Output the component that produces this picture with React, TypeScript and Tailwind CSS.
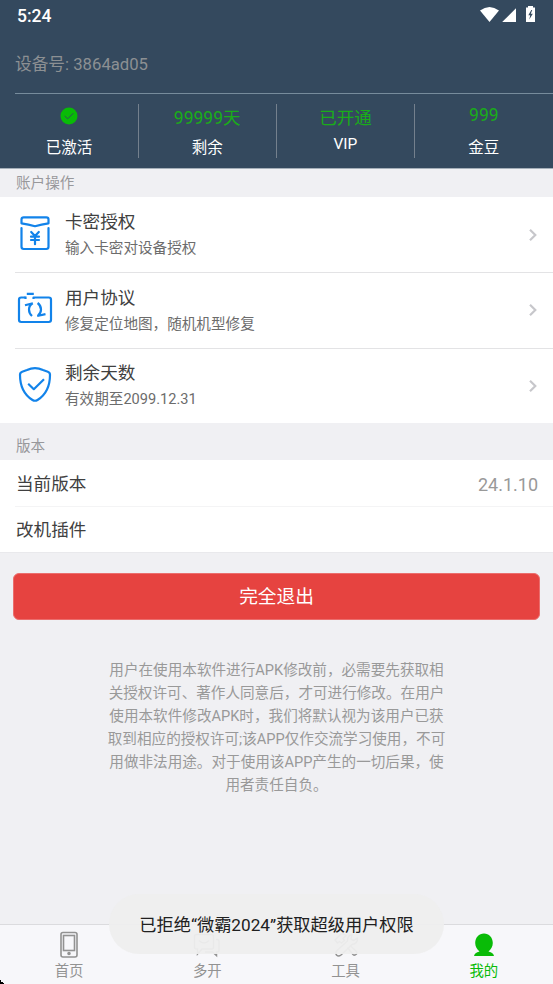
import type { ReactNode } from "react";

const stats = [
  { value: null, label: "已激活", valueClass: "mt-3.5 h-[19px]", labelClass: "mt-[10px]" },
  { value: "99999天", label: "剩余", valueClass: "mt-[15px] h-[19px]", labelClass: "mt-[9px]" },
  { value: "已开通", label: "VIP", valueClass: "mt-[15px] h-[19px]", labelClass: "mt-[5px]" },
  { value: "999", label: "金豆", valueClass: "mt-3 h-[19px]", labelClass: "mt-[12px]" },
];

const notice = [
  "用户在使用本软件进行APK修改前，必需要先获取相",
  "关授权许可、著作人同意后，才可进行修改。在用户",
  "使用本软件修改APK时，我们将默认视为该用户已获",
  "取到相应的授权许可;该APP仅作交流学习使用，不可",
  "用做非法用途。对于使用该APP产生的一切后果，使",
  "用者责任自负。",
];

function CardIcon() {
  return (
    <svg width="36" height="38" viewBox="0 0 36 38" fill="none" stroke="#1283ea" strokeWidth="2.2" strokeLinejoin="round" strokeLinecap="round">
      <path d="M4.500 9.300V5.500Q4.500 3.300 6.700 3.300H29.300Q31.500 3.300 31.500 5.500V9.300Q24.500 10.200 18 12.200Q11.500 10.200 4.500 9.300Z" />
      <path d="M4.500 14V32.800Q4.500 35 6.700 35H29.300Q31.500 35 31.500 32.800V14" />
      <path d="M14.200 18L18 22L21.800 18M14 22.700H22M14 26H22M18 22V30.200" />
    </svg>
  );
}

function RepairIcon() {
  return (
    <svg width="36" height="38" viewBox="0 0 36 38" fill="none" stroke="#1283ea" strokeWidth="2.200" strokeLinejoin="round">
      <path d="M8.500 7.500H4.200Q2 7.500 2 9.700V29.800Q2 32 4.200 32H31.800Q34 32 34 29.800V9.700Q34 7.500 31.800 7.500H16.500V9" />
      <path d="M9.800 3.800H16.800M8.500 6.400V9" />
      <path d="M15.800 13.200Q12 15.200 12 19.500Q12 23.200 15 26M8 15.200L15.800 13.200M20.600 13Q24 15.500 24 19.500Q24 23 21 25.600M20.200 26L28.500 24.200" />
    </svg>
  );
}

function ShieldIcon() {
  return (
    <svg width="36" height="38" viewBox="0 0 36 38" fill="none" stroke="#1283ea" strokeWidth="2.200" strokeLinejoin="round">
      <path d="M18 3.200Q14 3.200 10 5L5.200 6.700Q3 7.500 3 9.700C3 21 7.500 30 15.500 35Q18 36.500 20.500 35C28.500 30 33 21 33 9.700Q33 7.500 30.800 6.700L26 5Q22 3.200 18 3.200Z" />
      <path d="M11.200 18.800L16.800 24.200L27 14.200" />
    </svg>
  );
}

const actions = [
  { icon: <CardIcon />, title: "卡密授权", desc: "输入卡密对设备授权" },
  { icon: <RepairIcon />, title: "用户协议", desc: "修复定位地图，随机机型修复" },
  { icon: <ShieldIcon />, title: "剩余天数", desc: "有效期至2099.12.31" },
];

function Chevron() {
  return (
    <svg width="10" height="14" viewBox="0 0 10 14" fill="none" stroke="#c7c7cb" strokeWidth="2.200">
      <path d="M2 1.800L7.300 7L2 12.200" />
    </svg>
  );
}

function StatusIcons() {
  return (
    <svg width="58" height="20" viewBox="0 0 58 20" fill="#fff" className="-mt-1.5">
      <path d="M1 7.500Q10.500 0.500 20 7.500L10.500 19Z" />
      <path d="M37 5.200V19H23.200Z" />
      <path d="M49 4.500V3H54V4.500H56V19H47V4.500ZM52.300 7L49.300 12.200H51.200L50.300 16.500L53.800 10.800H51.800L53.200 7Z" fillRule="evenodd" />
    </svg>
  );
}

function Tab({ icon, label, active = false }: { icon: ReactNode; label: string; active?: boolean }) {
  return (
    <div className={`flex flex-1 flex-col items-center pt-[6px] ${active ? "text-[#09bb07]" : "text-[#929292]"}`}>
      <div className="h-[30px]">{icon}</div>
      <span className="text-[14.400px] leading-[22px]">{label}</span>
    </div>
  );
}

export default function App() {
  return (
    <div className="relative flex h-[984px] w-[553px] flex-col overflow-hidden bg-[#f0f0f3] font-['Roboto','Noto_Sans_CJK_SC',sans-serif] text-[#404040]">
      {/* Header */}
      <header className="h-[168px] shrink-0 bg-[#34495e]">
        <div className="flex h-[32px] items-center justify-between pl-[17px] pr-4">
          <span className="text-[17.500px] font-medium text-white">5:24</span>
          <StatusIcons />
        </div>
        <div className="ml-[15px] flex h-[62px] items-center border-b border-[#778c9c] pt-[4px] text-[16.700px] leading-6 text-[#8c9093]">
          设备号: 3864ad05
        </div>
        <div className="grid h-[74px] grid-cols-4">
          {stats.map((stat, index) => (
            <div key={stat.label} className="flex">
              <div className="flex flex-1 flex-col items-center">
                <div className={`text-[17.500px] leading-[19px] text-[#1aad19] ${stat.valueClass}`}>
                  {stat.value ?? (
                    <svg width="18" height="18" viewBox="0 0 18 18" className="-mt-px">
                      <circle cx="9" cy="9" r="8.500" fill="#09bb07" />
                      <path d="M4.700 9L7.700 11.800L13.300 6.200" fill="none" stroke="#34495e" />
                    </svg>
                  )}
                </div>
                <div className={`text-[15.500px] leading-[22px] text-white ${stat.labelClass}`}>{stat.label}</div>
              </div>
              {index < 3 && <div className="-mr-[0.6px] mt-2.5 h-[54px] w-px bg-[#74808d]" />}
            </div>
          ))}
        </div>
      </header>

      {/* Account */}
      <div className="h-[29px] shrink-0 border-t border-[#a5afb9] pl-[16px] text-[14.600px] leading-[29px] text-[#98989b]">账户操作</div>
      <div className="shrink-0 bg-white">
        {actions.map((action, index) => (
          <div key={action.title} className={`flex pl-[15px] ${index === 2 ? "h-[74px]" : "h-[76px]"}`}>
            <div className={`flex flex-1 pl-[2px] pr-[15px] ${index < 2 ? "border-b border-[#e3e3e5]" : ""}`}>
              <div className={index === 2 ? "mt-[16px]" : "mt-[17px]"}>{action.icon}</div>
              <div className={`ml-3 flex-1 ${index === 2 ? "mt-[11px]" : "mt-[12px]"}`}>
                <div className="text-[17.600px] leading-[27px]">{action.title}</div>
                <div className="text-[14.600px] leading-[25px] text-[#6c6c6c]">{action.desc}</div>
              </div>
              <div className={index === 0 ? "mt-[31px]" : "mt-[30px]"}><Chevron /></div>
            </div>
          </div>
        ))}
      </div>

      {/* Version */}
      <div className="h-[37px] shrink-0 pl-[16px] text-[14.600px] leading-[46px] text-[#98989b]">版本</div>
      <div className="shrink-0 bg-white text-[17.600px]">
        <div className="ml-[15px] flex h-[47px] items-center justify-between border-b border-[#f4f4f5] pl-px pr-[15px] pt-0.5">
          <span>当前版本</span>
          <span className="text-[18px] text-[#999]">24.1.10</span>
        </div>
        <div className="flex h-[46px] items-center border-b border-[#e9e9ec] pl-4 pt-px">改机插件</div>
      </div>

      <button className="mx-[13px] mt-[20px] h-[47px] shrink-0 rounded-md border border-[#eb6e6d] bg-[#e64340] pt-0.5 text-[18.700px] text-white">
        完全退出
      </button>

      <div className="mt-[39px] flex-1 text-center text-[14.600px] leading-[23px] text-[#999]">
        {notice.map((line) => (
          <p key={line}>{line}</p>
        ))}
      </div>

      {/* Tab bar */}
      <nav className="flex h-[60px] shrink-0 border-t border-[#dbdbde] bg-[#f7f7fa]">
        <Tab
          label="首页"
          icon={
            <svg width="18" height="28" viewBox="0 0 18 28" fill="none" stroke="currentColor" strokeWidth="1.600">
              <rect x="1" y="1.500" width="16" height="24.500" rx="2" />
              <rect x="3.500" y="4.500" width="11" height="15" />
              <circle cx="9" cy="22.500" r="1" fill="currentColor" />
            </svg>
          }
        />
        <Tab
          label="多开"
          icon={
            <svg width="28" height="28" viewBox="0 0 28 28" fill="none" stroke="currentColor" strokeWidth="1.500">
              <path d="M3.500 3.500H18.500Q20.500 3.500 20.500 5.500V16Q20.500 18 18.500 18H9L4.500 23V18H3.500Q1.500 18 1.500 16V5.500Q1.500 3.500 3.500 3.500Z" />
              <path d="M6 9.500Q11 14.500 16 9.500M23 8.500H24Q26 8.500 26 10.500V19Q26 21 24 21H23.500V24.500L19.500 21H12" />
            </svg>
          }
        />
        <Tab
          label="工具"
          icon={
            <svg width="28" height="28" viewBox="0 0 28 28" fill="none" stroke="currentColor" strokeWidth="1.500" strokeLinejoin="round">
              <path d="M3 9L9 3Q12 2.500 14 4.500L11 7.500L12.500 9.500L9.500 12L7.500 10.500L5.500 12Z" />
              <path d="M15.500 16.500L21 23.500Q22.500 25 24.500 23Q25.500 21.500 24 20L18 14.500" />
              <path d="M15.500 10Q15 5 20 3.500L19 8L21.500 9.500L25.500 7Q26 12.500 20 13.500L9 24Q6.500 26 4.500 24Q3 22 5 19.500Z" />
            </svg>
          }
        />
        <Tab
          active
          label="我的"
          icon={
            <svg width="22" height="28" viewBox="0 0 22 28" fill="currentColor">
              <path d="M11 2.500C16 2.500 19.800 6.500 19.800 12C19.800 15.500 18 18.500 15.500 20.500Q20.500 21.500 21 25H1Q1.500 21.500 6.500 20.500C4 18.500 2.200 15.500 2.200 12C2.200 6.500 6 2.500 11 2.500Z" />
            </svg>
          }
        />
      </nav>

      {/* Toast */}
      <div className="absolute left-[109px] top-[894px] flex h-[60px] w-[335px] items-center justify-center whitespace-nowrap rounded-full bg-[#eeeeee]/95 pt-[3px] text-[17.200px] text-[#202020]">
        已拒绝“微霸2024”获取超级用户权限
      </div>
      <svg className="absolute bottom-0 left-0" width="4" height="4" viewBox="0 0 4 4">
        <path d="M0 0H1V2H3V3H4V4H0Z" />
      </svg>
    </div>
  );
}
